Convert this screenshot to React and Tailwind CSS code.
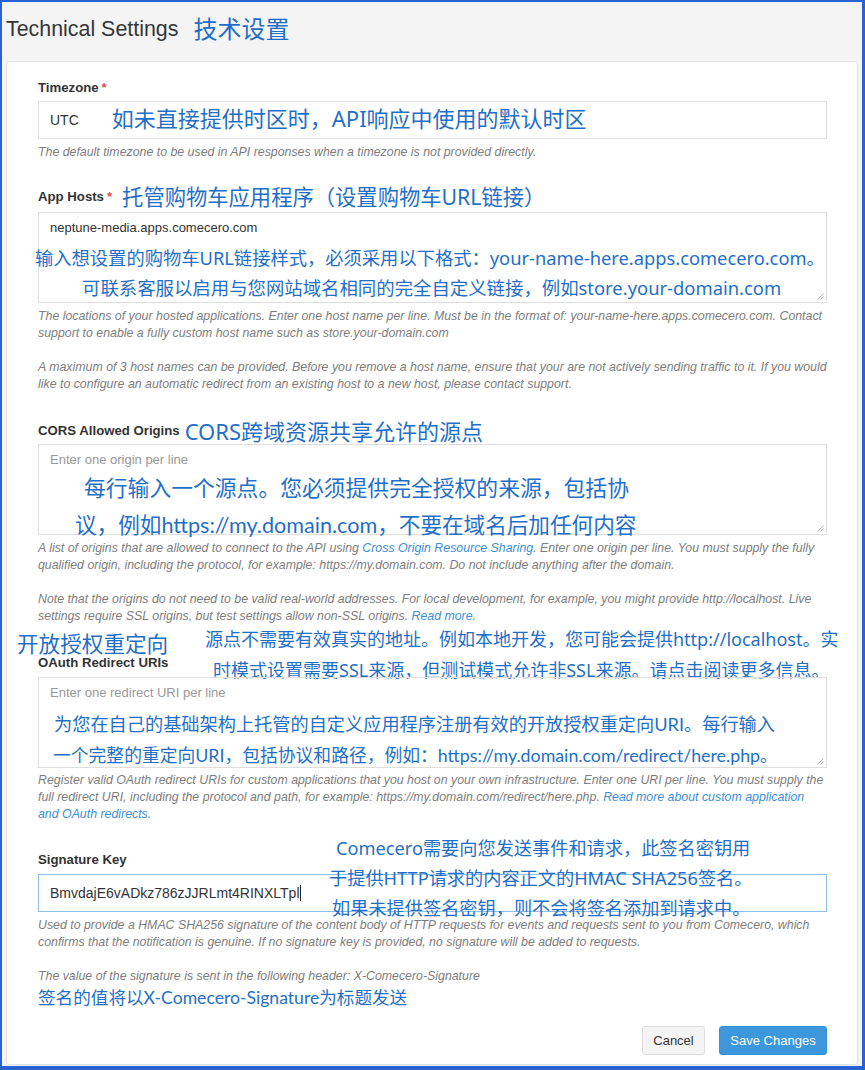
import React from "react";

const ANN = "font-['Noto_Sans','Noto_Sans_CJK_SC',sans-serif] text-[#1f6fc9] whitespace-nowrap";
const ANN2 = "font-['Lato','Noto_Sans_CJK_SC',sans-serif] text-[#1f6fc9] whitespace-nowrap";
const HELP = "font-['Liberation_Sans',Arial,sans-serif] italic text-[12.35px] leading-[17px] text-[#7d7d7d] whitespace-nowrap";
const LABEL = "font-['Liberation_Sans',Arial,sans-serif] font-bold text-[13.2px] leading-[18px] text-[#333333] whitespace-nowrap";
const LINK = "text-[#3b8fd8]";

function Resize() {
  return (
    <svg className="absolute right-[2px] bottom-[2px]" width="8" height="8" viewBox="0 0 8 8">
      <path d="M7.5 1.5L1.5 7.5M7.5 4.5L4.5 7.5" stroke="#b5b5b5" strokeWidth="1" />
    </svg>
  );
}

function Star() {
  return <span className="text-[#d9534f] ml-[3px]">*</span>;
}

export default function App() {
  return (
    <div className="w-[865px] h-[1070px] bg-[#f4f4f4] border-t-[2px] border-l-[2px] border-r-[3px] border-b-[4px] border-[#2a62d6] flex flex-col overflow-hidden">
      {/* title */}
      <div className="h-[59px] shrink-0 flex items-center pl-[4px] pb-[5px] gap-[15px]">
        <span className="font-['Liberation_Sans',Arial,sans-serif] text-[21.4px] text-[#363636] whitespace-nowrap">Technical Settings</span>
        <span className="font-['Noto_Sans','Noto_Sans_CJK_SC',sans-serif] text-[24px] leading-[30px] text-[#1f6fc9]">技术设置</span>
      </div>

      {/* card */}
      <div className="mx-[4px] mb-[3px] flex-1 bg-white border border-[#e3e3e3] rounded-[3px] pl-[31px] pr-[30px] pt-[17px] pb-[9px] flex flex-col font-['Liberation_Sans',Arial,sans-serif]">
        {/* Timezone */}
        <div className={LABEL}>Timezone<Star /></div>
        <div className="mt-[4px] h-[38px] border border-[#dedede] flex items-center pl-[11px] text-[14px] text-[#333333]">
          <span>UTC</span>
          <span className={ANN + " ml-[33px] text-[22px] leading-[30px] -mt-[5px]"}>如未直接提供时区时，API响应中使用的默认时区</span>
        </div>
        <div className={HELP + " mt-[5px]"}>The default timezone to be used in API responses when a timezone is not provided directly.</div>

        {/* App Hosts */}
        <div className="mt-[23px] h-[26px] flex items-center gap-[10px]">
          <span className={LABEL}>App Hosts<Star /></span>
          <span className={ANN + " text-[21.3px] leading-[28px]"}>托管购物车应用程序（设置购物车URL链接）</span>
        </div>
        <div className="mt-[2px] h-[91px] border border-[#dedede] relative">
          <div className="pl-[11px] pt-[6px] text-[13px] leading-[18px] text-[#333333]">neptune-media.apps.comecero.com</div>
          <div className={ANN + " absolute left-[-4px] top-[30px] text-[18.3px] leading-[30px]"}>输入想设置的购物车URL链接样式，必须采用以下格式：your-name-here.apps.comecero.com。</div>
          <div className={ANN + " absolute left-[43px] top-[60px] text-[18.4px] leading-[30px]"}>可联系客服以启用与您网站域名相同的完全自定义链接，例如store.your-domain.com</div>
          <Resize />
        </div>
        <div className="mt-[5px]">
          <div className={HELP}>The locations of your hosted applications. Enter one host name per line. Must be in the format of: your-name-here.apps.comecero.com. Contact</div>
          <div className={HELP}>support to enable a fully custom host name such as store.your-domain.com</div>
        </div>
        <div className="mt-[17px]">
          <div className={HELP}>A maximum of 3 host names can be provided. Before you remove a host name, ensure that your are not actively sending traffic to it. If you would</div>
          <div className={HELP}>like to configure an automatic redirect from an existing host to a new host, please contact support.</div>
        </div>

        {/* CORS */}
        <div className="mt-[25px] h-[26px] flex items-center gap-[5px]">
          <span className={LABEL}>CORS Allowed Origins</span>
          <span className={ANN + " text-[22px] leading-[28px]"}>CORS跨域资源共享允许的源点</span>
        </div>
        <div className="h-[91px] border border-[#dedede] relative">
          <div className="pl-[11px] pt-[6px] text-[13px] leading-[18px] text-[#999999]">Enter one origin per line</div>
          <div className={ANN2 + " absolute left-[45px] top-[27px] text-[21.8px] leading-[32px]"}>每行输入一个源点。您必须提供完全授权的来源，包括协</div>
          <div className={ANN2 + " absolute left-[36px] top-[64px] text-[21.6px] leading-[32px]"}>议，例如https://my.domain.com，不要在域名后加任何内容</div>
          <Resize />
        </div>
        <div className="mt-[5px]">
          <div className={HELP}>A list of origins that are allowed to connect to the API using <span className={LINK}>Cross Origin Resource Sharing</span>. Enter one origin per line. You must supply the fully</div>
          <div className={HELP}>qualified origin, including the protocol, for example: https://my.domain.com. Do not include anything after the domain.</div>
        </div>
        <div className="mt-[17px]">
          <div className={HELP}>Note that the origins do not need to be valid real-world addresses. For local development, for example, you might provide http://localhost. Live</div>
          <div className={HELP}>settings require SSL origins, but test settings allow non-SSL origins. <span className={LINK}>Read more.</span></div>
        </div>

        {/* OAuth */}
        <div className="mt-[29px] relative">
          <div className={LABEL}>OAuth Redirect URIs</div>
          <div className={ANN + " absolute left-[-21px] top-[-25px] text-[21.6px] leading-[30px]"}>开放授权重定向</div>
          <div className={ANN + " absolute left-[167px] top-[-30px] text-[18px] leading-[30px]"}>源点不需要有效真实的地址。例如本地开发，您可能会提供http://localhost。实</div>
          <div className={ANN + " absolute left-[175px] top-[1px] text-[18px] leading-[30px]"}>时模式设置需要SSL来源，但测试模式允许非SSL来源。请点击阅读更多信息。</div>
        </div>
        <div className="mt-[5px] h-[91px] border border-[#dedede] relative">
          <div className="pl-[11px] pt-[6px] text-[13px] leading-[18px] text-[#999999]">Enter one redirect URI per line</div>
          <div className={ANN2 + " absolute left-[15px] top-[31px] text-[18.2px] leading-[30px]"}>为您在自己的基础架构上托管的自定义应用程序注册有效的开放授权重定向URI。每行输入</div>
          <div className={ANN2 + " absolute left-[14px] top-[62px] text-[17.8px] leading-[30px]"}>一个完整的重定向URI，包括协议和路径，例如：https://my.domain.com/redirect/here.php。</div>
          <Resize />
        </div>
        <div className="mt-[4px]">
          <div className={HELP}>Register valid OAuth redirect URIs for custom applications that you host on your own infrastructure. Enter one URI per line. You must supply the</div>
          <div className={HELP}>full redirect URI, including the protocol and path, for example: https://my.domain.com/redirect/here.php. <span className={LINK}>Read more about custom application</span></div>
          <div className={HELP}><span className={LINK}>and OAuth redirects.</span></div>
        </div>

        {/* Signature */}
        <div className="mt-[28px] relative">
          <div className={LABEL}>Signature Key</div>
          <div className={ANN + " absolute left-[298px] top-[-18px] text-[18.2px] leading-[30px] z-10"}>Comecero需要向您发送事件和请求，此签名密钥用</div>
          <div className={ANN + " absolute left-[291px] top-[12px] text-[18.2px] leading-[30px] z-10"}>于提供HTTP请求的内容正文的HMAC SHA256签名。</div>
          <div className={ANN + " absolute left-[294px] top-[42px] text-[18.2px] leading-[30px] z-10"}>如果未提供签名密钥，则不会将签名添加到请求中。</div>
        </div>
        <div className="mt-[5px] h-[38px] border border-[#8dbfe9] flex items-center pl-[11px] text-[14px] text-[#333333]">
          <span>BmvdajE6vADkz786zJJRLmt4RINXLTpl</span>
          <span className="w-[1px] h-[16px] bg-[#222222]"></span>
        </div>
        <div className="mt-[5px]">
          <div className={HELP}>Used to provide a HMAC SHA256 signature of the content body of HTTP requests for events and requests sent to you from Comecero, which</div>
          <div className={HELP}>confirms that the notification is genuine. If no signature key is provided, no signature will be added to requests.</div>
        </div>
        <div className={HELP + " mt-[17px]"}>The value of the signature is sent in the following header: X-Comecero-Signature</div>
        <div className={ANN2 + " h-[26px] leading-[26px] text-[17.6px]"}>签名的值将以X-Comecero-Signature为标题发送</div>

        {/* buttons */}
        <div className="mt-[15px] flex justify-end gap-[14px]">
          <button className="h-[29px] w-[63px] bg-[#f4f4f4] border border-[#dddddd] rounded-[3px] text-[13px] text-[#333333]">Cancel</button>
          <button className="h-[29px] w-[108px] bg-[#3c97dd] border border-[#3590d6] rounded-[3px] text-[13px] text-white">Save Changes</button>
        </div>
      </div>
    </div>
  );
}
